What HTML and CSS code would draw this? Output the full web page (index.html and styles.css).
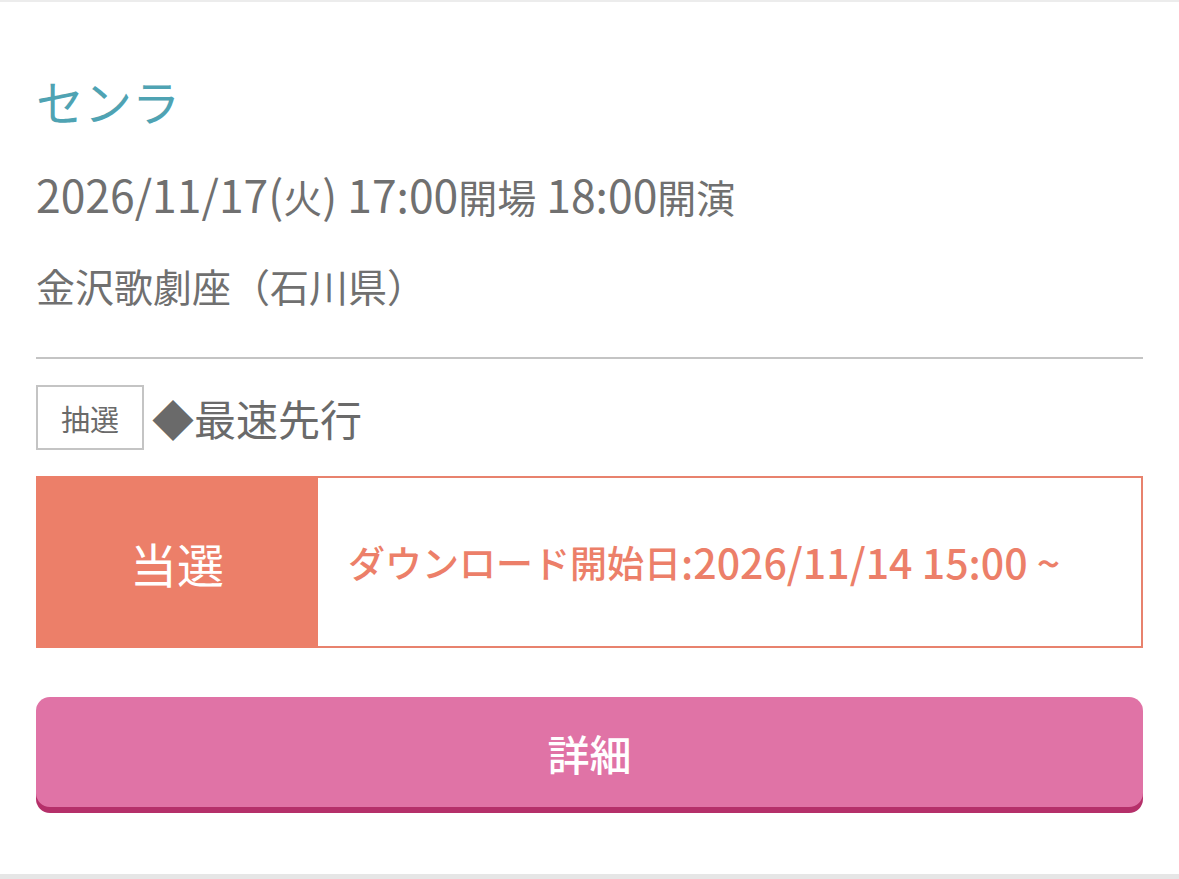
FILE: index.html
```html
<!DOCTYPE html>
<html lang="ja">
<head>
    <meta charset="UTF-8">
    <meta name="viewport" content="width=device-width, initial-scale=1.0">
    <title>センラ</title>
    <link rel="stylesheet" href="styles.css">
</head>
<body>
    <div class="card">
        <h2 class="artist">センラ</h2>
        <p class="datetime"><span class="num">2026/11/17(</span>火<span class="num">) 17:00</span>開場<span class="num"> 18:00</span>開演</p>
        <p class="venue">金沢歌劇座（石川県）</p>

        <div class="divider"></div>

        <div class="sale">
            <span class="sale-tag">抽選</span>
            <span class="sale-name">◆最速先行</span>
        </div>

        <div class="result">
            <div class="result-label">当選</div>
            <div class="result-info">ダウンロード開始日<span class="num">:2026/11/14 15:00 ~</span></div>
        </div>

        <a class="detail-btn" href="#">詳細</a>
    </div>
</body>
</html>
```

FILE: styles.css
```css
* {
    margin: 0;
    padding: 0;
    box-sizing: border-box;
    font-family: "Noto Sans CJK JP", "Noto Sans", sans-serif;
}

body {
    background: #fff;
    color: #707070;
}

.card {
    border-top: 2px solid #ececec;
    border-bottom: 5px solid #e6e6e6;
    padding: 0 36px 67px;
}

.num {
    font-size: 1.11em;
    line-height: 1;
}

.artist {
    margin-top: 68px;
    font-size: 48px;
    line-height: 60px;
    font-weight: 400;
    color: #4fa3b3;
}

.datetime {
    margin-top: 38px;
    font-size: 39px;
    line-height: 56px;
}

.datetime .num {
    font-size: 1.14em;
}

.venue {
    margin-top: 33px;
    font-size: 39px;
    line-height: 56px;
}

.divider {
    margin-top: 44px;
    border-top: 2px solid #c4c4c4;
}

.sale {
    margin-top: 26px;
    display: flex;
    align-items: center;
    gap: 8px;
}

.sale-tag {
    width: 108px;
    height: 65px;
    border: 2px solid #c4c4c4;
    display: flex;
    align-items: center;
    justify-content: center;
    font-size: 29px;
    color: #6a6a6a;
}

.sale-name {
    font-size: 42px;
    line-height: 56px;
    color: #6a6a6a;
}

.result {
    margin-top: 26px;
    height: 172px;
    border: 2px solid #e8826d;
    display: flex;
}

.result-label {
    width: 282px;
    margin: -2px 0 -2px -2px;
    background: #ec7f69;
    color: #fff;
    font-size: 47px;
    display: flex;
    align-items: center;
    justify-content: center;
}

.result-info {
    flex: 1;
    padding-left: 30px;
    display: flex;
    align-items: center;
    font-size: 37px;
    font-weight: 500;
    color: #ec7f69;
    white-space: pre;
}

.detail-btn {
    margin-top: 49px;
    height: 110px;
    border-radius: 14px;
    background: #e073a6;
    box-shadow: 0 6px 0 #b5306a;
    display: flex;
    align-items: center;
    justify-content: center;
    color: #fff;
    font-size: 42px;
    font-weight: 500;
    text-decoration: none;
}
```
